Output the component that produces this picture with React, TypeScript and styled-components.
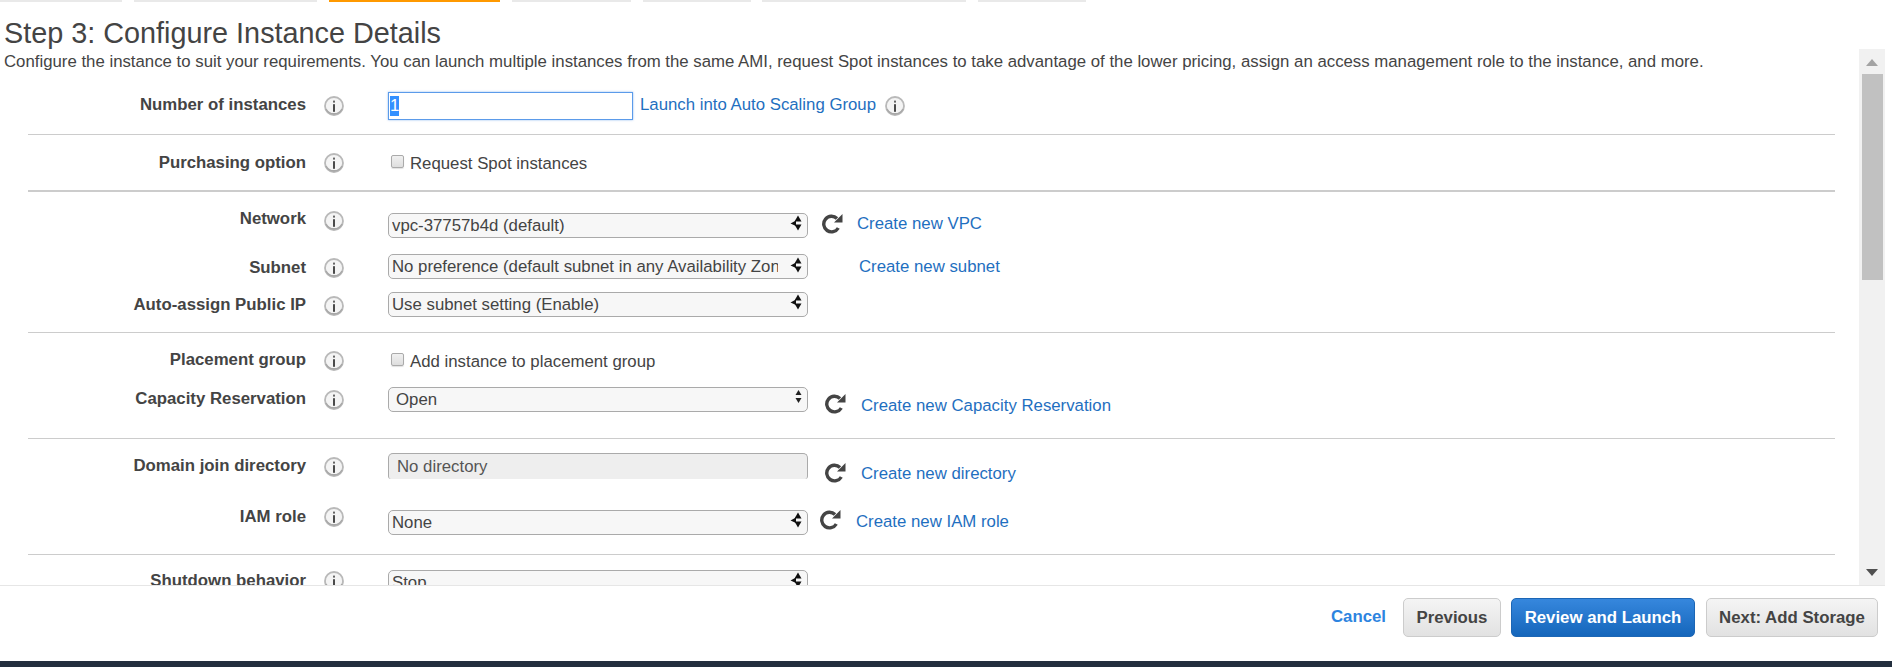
import React from 'react';
import styled, {createGlobalStyle} from 'styled-components';

const GlobalStyle = createGlobalStyle`
  html, body {
    margin: 0;
    padding: 0;
    height: 100%;
    background: #fff;
    overflow: hidden;
  }
  * { box-sizing: border-box; }
  body {
    font-family: "Liberation Sans", Arial, sans-serif;
    font-size: 16.8px;
    color: #444;
  }
`;

const tabs = [
  {width: 122, left: 0},
  {width: 183, left: 12},
  {width: 171, left: 12, active: true},
  {width: 119, left: 12},
  {width: 108, left: 12},
  {width: 204, left: 11},
  {width: 108, left: 12},
];

const InfoIcon = ({top = 0, left = 0}: {top?: number; left?: number}) => (
  <InfoWrap $top={top} $left={left}>
    <svg width="20" height="20" viewBox="0 0 20 20">
      <circle cx="10" cy="10" r="9" fill="#f4f4f4" stroke="#b9b9b9" strokeWidth="1.8" />
      <path d="M2 13 A9 9 0 0 0 18 13" fill="none" stroke="#a8a8a8" strokeWidth="1.6" />
      <rect x="9" y="8.2" width="2" height="7.6" fill="#4a4a4a" />
      <rect x="9" y="4.6" width="2" height="2" fill="#666" />
    </svg>
  </InfoWrap>
);

const SelectArrows = ({thin, top = 2}: {thin?: boolean; top?: number}) =>
  thin ? (
    <ArrowBox $right={6} $top={2}>
      <svg width="7" height="15" viewBox="0 0 7 15">
        <path d="M3.5 1 L6.5 6 L0.5 6 Z" fill="#222" />
        <path d="M3.5 14 L6.5 9 L0.5 9 Z" fill="#222" />
      </svg>
    </ArrowBox>
  ) : (
    <ArrowBox $right={6} $top={top}>
      <svg width="12" height="16" viewBox="0 0 12 16">
        <path d="M8 0.5 L11.5 6.5 L4.5 6.5 Z" fill="#111" />
        <path d="M8 15.5 L11.5 9.5 L4.5 9.5 Z" fill="#111" />
        <path d="M0.5 8.5 L6 5.5 L6 11 Z" fill="#111" />
      </svg>
    </ArrowBox>
  );

const SelectField = ({
  value,
  thin,
  pad = 4,
  arrowTop,
}: {
  value: string;
  thin?: boolean;
  pad?: number;
  arrowTop?: number;
}) => (
  <SelectBox>
    <Select $pad={pad} defaultValue={value}>
      <option>{value}</option>
    </Select>
    <SelectArrows thin={thin} top={arrowTop} />
  </SelectBox>
);

const Refresh = ({left, top}: {left: number; top: number}) => (
  <RefreshWrap $left={left} $top={top}>
    <svg width="22" height="21" viewBox="0 0 22 21">
      <path
        d="M16 5.5 A7.8 7.8 0 1 0 17.3 15"
        fill="none"
        stroke="#444"
        strokeWidth="3.4"
      />
      <path d="M21.5 1 L21.5 9.5 L13 9.5 Z" fill="#444" />
    </svg>
  </RefreshWrap>
);

const App = () => (
  <Page>
    <GlobalStyle />
    <TabBar>
      {tabs.map((tab, i) => (
        <Tab key={i} $width={tab.width} $left={tab.left} $active={tab.active} />
      ))}
    </TabBar>
    <Title>Step 3: Configure Instance Details</Title>
    <Body>
      <Scroller>
        <Description>
          Configure the instance to suit your requirements. You can launch multiple instances from
          the same AMI, request Spot instances to take advantage of the lower pricing, assign an
          access management role to the instance, and more.
        </Description>

        <Row $top={18} $height={42}>
          <Label $top={3}>Number of instances</Label>
          <InfoIcon top={4} />
          <Control>
            <NumberInput>
              <Selected>1</Selected>
            </NumberInput>
            <TextLink $left={7} $top={3}>Launch into Auto Scaling Group</TextLink>
            <InfoIcon top={4} left={9} />
          </Control>
        </Row>
        <Divider />

        <Row $top={17} $height={38}>
          <Label $top={1}>Purchasing option</Label>
          <InfoIcon top={1} />
          <Control>
            <Check $top={3} type="checkbox" />
            <CheckText $top={2}>Request Spot instances</CheckText>
          </Control>
        </Row>
        <Divider $thick />

        <Row $top={21} $height={41}>
          <Label $top={-4}>Network</Label>
          <InfoIcon top={-2} />
          <Control>
            <SelectField value="vpc-37757b4d (default)" />
            <Refresh left={13} top={0} />
            <TextLink $left={14} $top={1}>Create new VPC</TextLink>
          </Control>
        </Row>
        <Row $height={38}>
          <Label $top={4}>Subnet</Label>
          <InfoIcon top={4} />
          <Control>
            <SelectField value="No preference (default subnet in any Availability Zone)" arrowTop={3} />
            <TextLink $left={51} $top={3}>Create new subnet</TextLink>
          </Control>
        </Row>
        <Row $height={40}>
          <Label $top={3}>Auto-assign Public IP</Label>
          <InfoIcon top={4} />
          <Control>
            <SelectField value="Use subnet setting (Enable)" />
          </Control>
        </Row>
        <Divider />

        <Row $top={20} $height={34}>
          <Label $top={-3}>Placement group</Label>
          <InfoIcon top={-2} />
          <Control>
            <Check $top={0} type="checkbox" />
            <CheckText $top={-1}>Add instance to placement group</CheckText>
          </Control>
        </Row>
        <Row $height={51}>
          <Label $top={2}>Capacity Reservation</Label>
          <InfoIcon top={3} />
          <Control>
            <SelectField value="Open" thin pad={8} />
            <Refresh left={16} top={6} />
            <TextLink $left={15} $top={9}>Create new Capacity Reservation</TextLink>
          </Control>
        </Row>
        <Divider />

        <Row $top={14} $height={57}>
          <Label $top={3}>Domain join directory</Label>
          <InfoIcon top={4} />
          <Control>
            <DirectoryBox>No directory</DirectoryBox>
            <Refresh left={16} top={9} />
            <TextLink $left={15} $top={11}>Create new directory</TextLink>
          </Control>
        </Row>
        <Row $height={44}>
          <Label $top={-3}>IAM role</Label>
          <InfoIcon top={-3} />
          <Control>
            <SelectField value="None" />
            <Refresh left={11} top={-1} />
            <TextLink $left={15} $top={2}>Create new IAM role</TextLink>
          </Control>
        </Row>
        <Divider />

        <Row $top={15} $height={40}>
          <Label $top={1}>Shutdown behavior</Label>
          <InfoIcon top={1} />
          <Control>
            <SelectField value="Stop" />
          </Control>
        </Row>
      </Scroller>
      <Scrollbar>
        <ScrollArrow $up />
        <ScrollThumb />
        <ScrollArrow />
      </Scrollbar>
    </Body>
    <Footer>
      <CancelLink>Cancel</CancelLink>
      <Button>Previous</Button>
      <PrimaryButton>Review and Launch</PrimaryButton>
      <NextButton>Next: Add Storage</NextButton>
    </Footer>
    <BottomBar />
  </Page>
);

const Page = styled.div`
  width: 1892px;
  height: 667px;
  display: flex;
  flex-direction: column;
  overflow: hidden;
  background: #fff;
`;
const TabBar = styled.div`
  display: flex;
  height: 2px;
  flex: none;
`;
const Tab = styled.div<{$width: number; $left: number; $active?: boolean}>`
  width: ${props => props.$width}px;
  margin-left: ${props => props.$left}px;
  background: ${props => (props.$active ? '#f90' : '#e9e9e9')};
`;
const Title = styled.h1`
  flex: none;
  height: 47px;
  margin: 0;
  padding: 15px 0 0 4px;
  font-size: 28.8px;
  line-height: 32px;
  font-weight: 400;
  color: #444;
`;
const Body = styled.div`
  flex: none;
  height: 537px;
  width: 1885px;
  display: flex;
  border-bottom: 1px solid #e6e6e6;
`;
const Scroller = styled.div`
  flex: 1;
  min-width: 0;
  overflow: hidden;
`;
const Description = styled.p`
  margin: 0;
  padding: 3px 0 0 4px;
  height: 25px;
  font-size: 16.8px;
  line-height: 20px;
  white-space: nowrap;
  color: #444;
`;
const Row = styled.div<{$top?: number; $height: number}>`
  display: grid;
  grid-template-columns: 278px 20px 1fr;
  column-gap: 18px;
  margin: ${props => props.$top ?? 0}px 24px 0 28px;
  height: ${props => props.$height}px;
  align-items: start;
`;
const Label = styled.div<{$top: number}>`
  margin-top: ${props => props.$top}px;
  text-align: right;
  font-weight: 700;
  font-size: 16.8px;
  line-height: 20px;
  color: #444;
  white-space: nowrap;
`;
const InfoWrap = styled.span<{$top: number; $left: number}>`
  display: block;
  flex: none;
  width: 20px;
  height: 20px;
  margin-top: ${props => props.$top}px;
  margin-left: ${props => props.$left}px;
  & svg {
    display: block;
  }
`;
const Control = styled.div`
  display: flex;
  align-items: flex-start;
  margin-left: 26px;
  min-width: 0;
`;
const NumberInput = styled.div`
  width: 245px;
  height: 28px;
  flex: none;
  border: 1px solid #5b9bea;
  box-shadow: 0 0 2px rgba(70, 140, 230, 0.6);
  padding: 3px 1px;
  font-size: 16.8px;
  line-height: 20px;
  color: #444;
`;
const Selected = styled.span`
  display: inline-block;
  background: #3390ff;
  color: #fff;
`;
const TextLink = styled.a<{$left: number; $top: number}>`
  margin-left: ${props => props.$left}px;
  margin-top: ${props => props.$top}px;
  font-size: 16.8px;
  line-height: 20px;
  color: #1f6fc0;
  white-space: nowrap;
  cursor: pointer;
`;
const Check = styled.input<{$top: number}>`
  appearance: none;
  flex: none;
  width: 13px;
  height: 13px;
  margin: ${props => props.$top}px 6px 0 3px;
  border: 1px solid #aaa;
  border-radius: 2px;
  background: linear-gradient(#f0f0f0, #dedede);
  box-shadow: 0 1px 1px rgba(0, 0, 0, 0.12);
`;
const CheckText = styled.span<{$top: number}>`
  margin-top: ${props => props.$top}px;
  font-size: 16.8px;
  line-height: 20px;
  color: #444;
  white-space: nowrap;
`;
const SelectBox = styled.div`
  position: relative;
  flex: none;
  width: 420px;
  height: 25px;
`;
const Select = styled.select<{$pad: number}>`
  appearance: none;
  display: block;
  width: 100%;
  height: 100%;
  margin: 0;
  padding: 0 29px 0 ${props => props.$pad - 1}px;
  border: 1px solid #aaa;
  border-radius: 5px;
  background: #f7f7f7;
  font-family: "Liberation Sans", Arial, sans-serif;
  font-size: 16.8px;
  color: #444;
  outline: none;
`;
const ArrowBox = styled.span<{$right: number; $top: number}>`
  position: absolute;
  top: ${props => props.$top}px;
  right: ${props => props.$right}px;
  display: block;
  line-height: 0;
  pointer-events: none;
`;
const DirectoryBox = styled.div`
  flex: none;
  width: 420px;
  height: 26px;
  padding: 3px 0 0 8px;
  border: 1px solid #aaa;
  border-bottom: none;
  border-radius: 5px 5px 3px 3px;
  background: #eee;
  font-size: 16.8px;
  line-height: 20px;
  color: #555;
`;
const RefreshWrap = styled.span<{$left: number; $top: number}>`
  flex: none;
  display: block;
  margin-left: ${props => props.$left}px;
  margin-top: ${props => props.$top}px;
  line-height: 0;
`;
const Divider = styled.hr<{$thick?: boolean}>`
  margin: 0 24px 0 28px;
  border: none;
  height: ${props => (props.$thick ? 2 : 1)}px;
  background: #ccc;
`;
const Scrollbar = styled.div`
  flex: none;
  width: 26px;
  height: 100%;
  background: #f1f1f1;
  display: flex;
  flex-direction: column;
  align-items: center;
`;
const ScrollThumb = styled.div`
  width: 21px;
  height: 206px;
  background: #c1c1c1;
`;
const ScrollArrow = styled.div<{$up?: boolean}>`
  width: 0;
  height: 0;
  border-left: 6px solid transparent;
  border-right: 6px solid transparent;
  ${props =>
    props.$up
      ? `
    border-bottom: 7px solid #a3a3a3;
    margin: 10px 0 8px;
  `
      : `
    border-top: 7px solid #505050;
    margin-top: auto;
    margin-bottom: 9px;
  `}
`;
const Footer = styled.div`
  flex: none;
  height: 75px;
  display: flex;
  align-items: flex-start;
  justify-content: flex-end;
  padding: 12px 14px 0 0;
`;
const CancelLink = styled.a`
  margin: 9px 17px 0 0;
  font-weight: 700;
  font-size: 16.8px;
  line-height: 20px;
  color: #2d84e0;
  cursor: pointer;
`;
const Button = styled.button`
  height: 39px;
  width: 98px;
  margin: 0;
  padding: 0;
  border: 1px solid #ccc;
  border-radius: 5px;
  background: linear-gradient(#f4f4f4, #e2e2e2);
  font-family: "Liberation Sans", Arial, sans-serif;
  font-weight: 700;
  font-size: 16.8px;
  color: #444;
`;
const PrimaryButton = styled(Button)`
  width: 184px;
  margin-left: 10px;
  border-color: #1c66b5;
  background: linear-gradient(#3687dd, #1566bb);
  color: #fff;
`;
const NextButton = styled(Button)`
  width: 172px;
  margin-left: 11px;
`;
const BottomBar = styled.div`
  flex: none;
  height: 6px;
  background: #232f3e;
`;

export default App;
